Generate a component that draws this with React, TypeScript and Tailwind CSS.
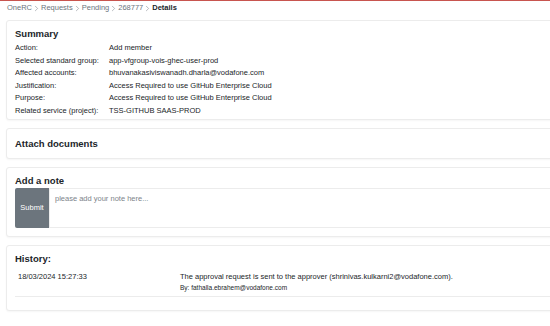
import { ChevronRight } from "lucide-react"

const summary: [string, string][] = [
  ["Action:", "Add member"],
  ["Selected standard group:", "app-vfgroup-vois-ghec-user-prod"],
  ["Affected accounts:", "bhuvanakasiviswanadh.dharla@vodafone.com"],
  ["Justification:", "Access Required to use GitHub Enterprise Cloud"],
  ["Purpose:", "Access Required to use GitHub Enterprise Cloud"],
  ["Related service (project):", "TSS-GITHUB SAAS-PROD"],
]

const crumbs = ["OneRC", "Requests", "Pending", "268777"]

function Card({ className, children }: { className?: string; children: React.ReactNode }) {
  return (
    <div className={"w-[600px] rounded-[3px] border border-[#ececec] bg-white shadow-[0_1px_2px_rgba(0,0,0,0.04)] pl-[8px] " + (className ?? "")}>
      {children}
    </div>
  )
}

export default function App() {
  return (
    <div className="w-[550px] h-[326px] overflow-hidden bg-white border-t border-[#c8554f] text-[#212529] font-['Liberation_Sans',Arial,sans-serif]">
      <nav className="flex items-center h-[14px] px-[7px] text-[7.5px] text-[#6c757d]">
        {crumbs.map((c) => (
          <span key={c} className="flex items-center">
            {c}
            <ChevronRight size={9} strokeWidth={1.3} className="mx-[0px]" />
          </span>
        ))}
        <span className="font-bold text-[#212529]">Details</span>
      </nav>

      <div className="flex flex-col gap-[8px] pl-[6px] pt-[5px]">
        <Card className="pt-[7px] pb-[2px]">
          <h2 className="text-[9.5px] font-bold leading-[12px] mb-[2px]">Summary</h2>
          <div className="text-[7.5px] leading-[12.5px]">
            {summary.map(([k, v]) => (
              <div key={k} className="flex">
                <span className="w-[94px]">{k}</span>
                <span>{v}</span>
              </div>
            ))}
          </div>
        </Card>

        <Card className="h-[31px] flex items-center">
          <h2 className="text-[9.5px] font-bold leading-[12px]">Attach documents</h2>
        </Card>

        <Card className="pt-[7px] pb-[8px]">
          <h2 className="text-[9.5px] font-bold leading-[12px] mb-[1px]">Add a note</h2>
          <div className="flex h-[40px]">
            <button className="w-[34px] h-full bg-[#6c757d] text-white text-[7.5px] rounded-l-[2px]">Submit</button>
            <textarea
              placeholder="please add your note here..."
              className="flex-1 h-full resize-none border border-[#ececec] px-[5px] py-[4px] text-[7.5px] placeholder:text-[#7d848a] outline-none"
            />
          </div>
        </Card>

        <Card className="pt-[7px] pb-[13px]">
          <h2 className="text-[9.5px] font-bold leading-[12px]">History:</h2>
          <div className="flex border-b border-[#ececec] mt-[6px] pb-[3px] pl-[3px] text-[7.5px]">
            <div className="w-[162px] leading-[12px]">18/03/2024 15:27:33</div>
            <div>
              <div className="leading-[12px]">The approval request is sent to the approver (shrinivas.kulkarni2@vodafone.com).</div>
              <div className="text-[6.5px] leading-[10px]">By: fathalla.ebrahem@vodafone.com</div>
            </div>
          </div>
        </Card>
      </div>
    </div>
  )
}
